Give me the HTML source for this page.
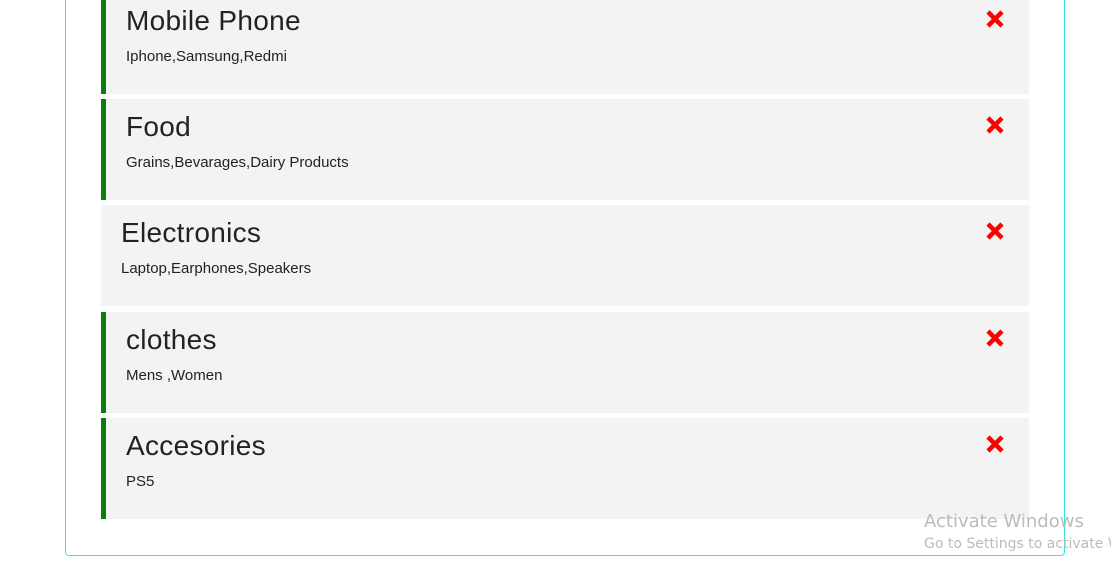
<!DOCTYPE html>
<html><head><style>
body{margin:0;width:1111px;height:567px;overflow:hidden;background:#fff;font-family:"Liberation Sans",sans-serif;position:relative}
.wrap{position:absolute;left:0;top:0;width:1111px;height:567px;overflow:hidden}
.box{position:absolute;left:65px;top:-20px;width:998px;height:574px;border:1px solid #2ee6e6;border-radius:4px}
.card{position:absolute;left:101px;width:928px;height:101px;background:#f3f3f3;box-sizing:border-box;padding-left:20px}
.g{border-left:5px solid #0a7d0a}
.t{position:absolute;top:12px;font-size:28px;color:#222;letter-spacing:0.3px}
.s{position:absolute;top:55px;font-size:15px;color:#222}
.x{position:absolute;left:884px;top:16px;width:20px;height:20px}
.g .x{left:879px}
.aw{position:absolute;left:924px;color:#bbb;font-family:"DejaVu Sans",sans-serif;white-space:nowrap}
</style></head><body><div class="wrap">
<div class="box"></div>
<div class="card g" style="top:-7px"><div class="t">Mobile Phone</div><div class="s">Iphone,Samsung,Redmi</div><svg class="x" viewBox="0 0 20 20"><path d="M3 3L17 17M17 3L3 17" stroke="red" stroke-width="4.5"/></svg></div>
<div class="card g" style="top:99px"><div class="t">Food</div><div class="s">Grains,Bevarages,Dairy Products</div><svg class="x" viewBox="0 0 20 20"><path d="M3 3L17 17M17 3L3 17" stroke="red" stroke-width="4.5"/></svg></div>
<div class="card" style="top:205px"><div class="t">Electronics</div><div class="s">Laptop,Earphones,Speakers</div><svg class="x" viewBox="0 0 20 20"><path d="M3 3L17 17M17 3L3 17" stroke="red" stroke-width="4.5"/></svg></div>
<div class="card g" style="top:312px"><div class="t">clothes</div><div class="s">Mens ,Women</div><svg class="x" viewBox="0 0 20 20"><path d="M3 3L17 17M17 3L3 17" stroke="red" stroke-width="4.5"/></svg></div>
<div class="card g" style="top:418px"><div class="t">Accesories</div><div class="s">PS5</div><svg class="x" viewBox="0 0 20 20"><path d="M3 3L17 17M17 3L3 17" stroke="red" stroke-width="4.5"/></svg></div>
<div class="aw" style="top:511px;font-size:18px">Activate Windows</div>
<div class="aw" style="top:536px;font-size:14px">Go to Settings to activate Windows.</div>
</div></body></html>
